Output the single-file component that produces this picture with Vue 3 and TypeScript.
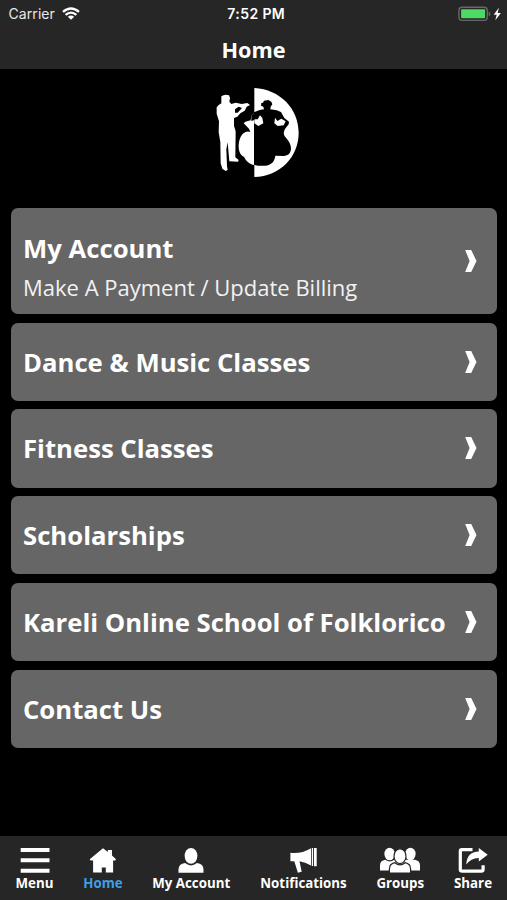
<script setup lang="ts">
interface MenuCard {
  title: string
  subtitle?: string
}

interface Tab {
  label: string
  icon: 'menu' | 'home' | 'user' | 'horn' | 'groups' | 'share'
  active?: boolean
}

const cards: MenuCard[] = [
  { title: 'My Account', subtitle: 'Make A Payment / Update Billing' },
  { title: 'Dance & Music Classes' },
  { title: 'Fitness Classes' },
  { title: 'Scholarships' },
  { title: 'Kareli Online School of Folklorico' },
  { title: 'Contact Us' },
]

const tabs: Tab[] = [
  { label: 'Menu', icon: 'menu' },
  { label: 'Home', icon: 'home', active: true },
  { label: 'My Account', icon: 'user' },
  { label: 'Notifications', icon: 'horn' },
  { label: 'Groups', icon: 'groups' },
  { label: 'Share', icon: 'share' },
]
</script>

<template>
  <div class="screen">
    <header class="header">
      <div class="status">
        <div class="carrier">
          <span>Carrier</span>
          <svg class="wifi" viewBox="0 0 18 13" aria-hidden="true">
            <path d="M1 4.9Q9-2 17 4.9M3.6 7.9Q9 3.4 14.4 7.9" fill="none" stroke="#fff" stroke-width="2.3" />
            <path d="M5.8 9.7Q9 7.2 12.2 9.7L9 12.8z" fill="#fff" />
          </svg>
        </div>
        <span class="time">7:52 PM</span>
        <svg class="battery" viewBox="0 0 46 16" aria-hidden="true">
          <rect x="0.9" y="1.2" width="28.4" height="13.2" rx="3.4" fill="none" stroke="#68686a" stroke-width="1.4" />
          <rect x="3.1" y="3.3" width="24" height="9" rx="1" fill="#4cd964" />
          <path d="M30.7 5.6q1.8.6 1.8 2.3t-1.8 2.3z" fill="#68686a" />
          <path d="M40.9 1.8L35.7 8.7h3l-1.4 5.5 5.6-7.3h-3.2z" fill="#fff" />
        </svg>
      </div>
      <h1 class="title">Home</h1>
    </header>

    <main class="content">
      <svg class="logo" viewBox="0 0 315 315" aria-hidden="true">
        <path
          fill="#fff"
          d="M49 49Q59 41 72 46L75 54 73 65 79 72 92 68 110 72 127 69 135 75 125 80 119 92 106 100 97 110 87 114 87 138 92 154 91 232 101 240 99 245 73 244 68 187 64 208 66 259 68 270 62 273 52 266 47 250 46 186 41 157 42 124 35 101 35 82 41 75 49 70z"
        />
        <path d="M90 88L101 80 111 84 98 98 90 98z" fill="#000" />
        <path
          fill="#fff"
          d="M148 24C225 28 281 86 281 158S226 289 148 291V255C133 252 124 244 117 230 106 226 100 212 101 194 103 174 111 160 122 156Q128 153 136 156L132 146 116 130 121 125 137 121 139 106 148 98z"
        />
        <path
          fill="#000"
          d="M147 97L164 90 177 88 175 80 168 77 169 69 174 68 177 62 190 60 199 65 202 73 197 80 196 88 215 91 228 96 238 114 252 125 251 133 240 147C236 154 235 162 239 169C248 179 257 190 258 204C258 219 250 227 236 228L211 227C209 243 200 256 180 257Q163 259 147 254z"
        />
        <path fill="#fff" d="M148 118L158 118 165 106 172 114 175 130 160 138 148 130zM210 113L217 123 229 116 242 124 236 136 218 138 208 130z" />
        <path fill="#000" d="M139 106L148 98V120L139 123z" />
      </svg>

      <nav class="cards">
        <a v-for="card in cards" :key="card.title" class="card" :class="{ tall: card.subtitle }">
          <div class="card-text">
            <span class="card-title">{{ card.title }}</span>
            <span v-if="card.subtitle" class="card-subtitle">{{ card.subtitle }}</span>
          </div>
          <svg class="chevron" viewBox="0 0 12 22" aria-hidden="true">
            <path d="M.2 0h6l5.3 11-5.3 11h-6l4.4-11z" fill="#fff" />
          </svg>
        </a>
      </nav>
    </main>

    <footer class="tabs">
      <a v-for="tab in tabs" :key="tab.label" class="tab" :class="{ active: tab.active }">
        <svg v-if="tab.icon === 'menu'" class="icon" viewBox="0 0 30 26" aria-hidden="true">
          <path d="M.7 1h28.8v4H.7zM.7 11.3h28.8v4H.7zM.7 21.7h28.8v4H.7z" />
        </svg>
        <svg v-else-if="tab.icon === 'home'" class="icon" viewBox="0 0 30 26" aria-hidden="true">
          <path d="M15 1.2L19.8 5V3h4.2v5.6L28 12.2l-.8 1.2h-2.1v12.2h-7.3V20.5h-4v5.1H5.1V13.4H2.5l-.8-1.2z" />
        </svg>
        <svg v-else-if="tab.icon === 'user'" class="icon" viewBox="0 0 30 26" aria-hidden="true">
          <ellipse cx="15" cy="8.8" rx="6.4" ry="7.9" />
          <path d="M2.5 25.8v-3.2q0-5.8 6.6-6.6Q15 20.8 20.9 16q6.6.8 6.6 6.6v3.2z" />
        </svg>
        <svg v-else-if="tab.icon === 'horn'" class="icon" viewBox="0 0 30 26" aria-hidden="true">
          <path d="M1.4 5.8Q12 7.2 22 1.2v17.4Q16 15 10.5 14.3l2.2 10.4-3.8 1.1L5.3 14.3H1.4zM22.8 1h1.3v18h-1.3zM25 .9h2.7v18.3H25z" />
        </svg>
        <svg v-else-if="tab.icon === 'groups'" class="icon wide" viewBox="0 0 42 26" aria-hidden="true">
          <ellipse cx="10.6" cy="7" rx="5.2" ry="6.3" />
          <ellipse cx="31.4" cy="7" rx="5.2" ry="6.3" />
          <path d="M1 23.4v-5q0-4.8 5.3-5.7 4.5 3.6 9 0L35.7 12.7Q41 13.6 41 18.4v5z" />
          <path
            class="outlined"
            d="M10.4 26.2v-4.2q0-5.2 5.5-6.3Q21 20 26.1 15.7q5.5 1.1 5.5 6.3v4.2z"
          />
          <ellipse class="outlined" cx="21" cy="9.2" rx="6" ry="7.4" />
        </svg>
        <svg v-else class="icon" viewBox="0 0 30 26" aria-hidden="true">
          <path d="M14.5 2.6H3.8Q2.3 2.6 2.3 4v18.4q0 1.7 1.9 1.7h19.1q1.8 0 1.8-1.7v-4.2" fill="none" stroke="#fff" stroke-width="3.2" />
          <path d="M8.3 17.6Q8.8 4.7 20.8 4.5V1l8.9 6.7-8.9 6.9v-3.7Q13.1 10.7 8.3 17.6z" />
        </svg>
        <span>{{ tab.label }}</span>
      </a>
    </footer>
  </div>
</template>

<style>
body {
  background: #000;
}
</style>

<style scoped>
.screen {
  display: flex;
  flex-direction: column;
  box-sizing: border-box;
  width: 507px;
  height: 900px;
  background: #000;
  color: #fff;
  font-family: 'Open Sans', sans-serif;
}

.header {
  height: 68.5px;
  background: #262626;
}

.status {
  display: grid;
  grid-template-columns: 1fr auto 1fr;
  align-items: center;
  height: 27px;
  padding: 0 3px 0 8.5px;
  font-family: Inter, sans-serif;
  font-size: 14px;
}

.carrier {
  display: flex;
  align-items: center;
  gap: 7px;
  color: #e8e8e8;
  letter-spacing: 0.08px;
}

.wifi {
  width: 18px;
  height: 13px;
}

.time {
  font-weight: 600;
  letter-spacing: 0.4px;
}

.battery {
  justify-self: end;
  width: 46px;
  height: 16px;
}

.title {
  margin: 0;
  font-size: 21.7px;
  font-weight: 700;
  line-height: 45px;
  text-align: center;
}

.content {
  flex: 1;
}

.logo {
  display: block;
  width: 105px;
  height: 105px;
  margin: 11.5px auto 23px 205px;
}

.cards {
  display: flex;
  flex-direction: column;
  gap: 8.6px;
  padding: 0 10.5px 0 11px;
}

.card {
  display: flex;
  align-items: center;
  justify-content: space-between;
  box-sizing: border-box;
  height: 78.2px;
  padding: 0 19.5px 0 12px;
  border-radius: 7px;
  background: #666;
}

.card.tall {
  height: 106px;
}

.card-text {
  display: flex;
  flex-direction: column;
  padding-top: 2px;
  white-space: nowrap;
}

.tall .card-text {
  padding-top: 13px;
}

.card-title {
  font-size: 25.7px;
  font-weight: 700;
  line-height: 36px;
}

.card-subtitle {
  margin-top: 4px;
  color: #f2f2f2;
  font-size: 22px;
  line-height: 33px;
}

.chevron {
  width: 12px;
  height: 22px;
}

.tabs {
  display: grid;
  grid-template-columns: 69px 68px 108.5px 116px 77.5px 68px;
  height: 64px;
  background: #262626;
}

.tab {
  display: flex;
  flex-direction: column;
  align-items: center;
  padding-top: 11px;
  font-size: 13.3px;
  font-weight: 700;
  line-height: 18px;
  white-space: nowrap;
}

.tab.active {
  color: #3f9fe5;
}

.icon {
  width: 30px;
  height: 26px;
  margin-bottom: 1px;
  fill: #fff;
}

.icon.wide {
  width: 42px;
}

.outlined {
  stroke: #262626;
  stroke-width: 1.2;
}
</style>
